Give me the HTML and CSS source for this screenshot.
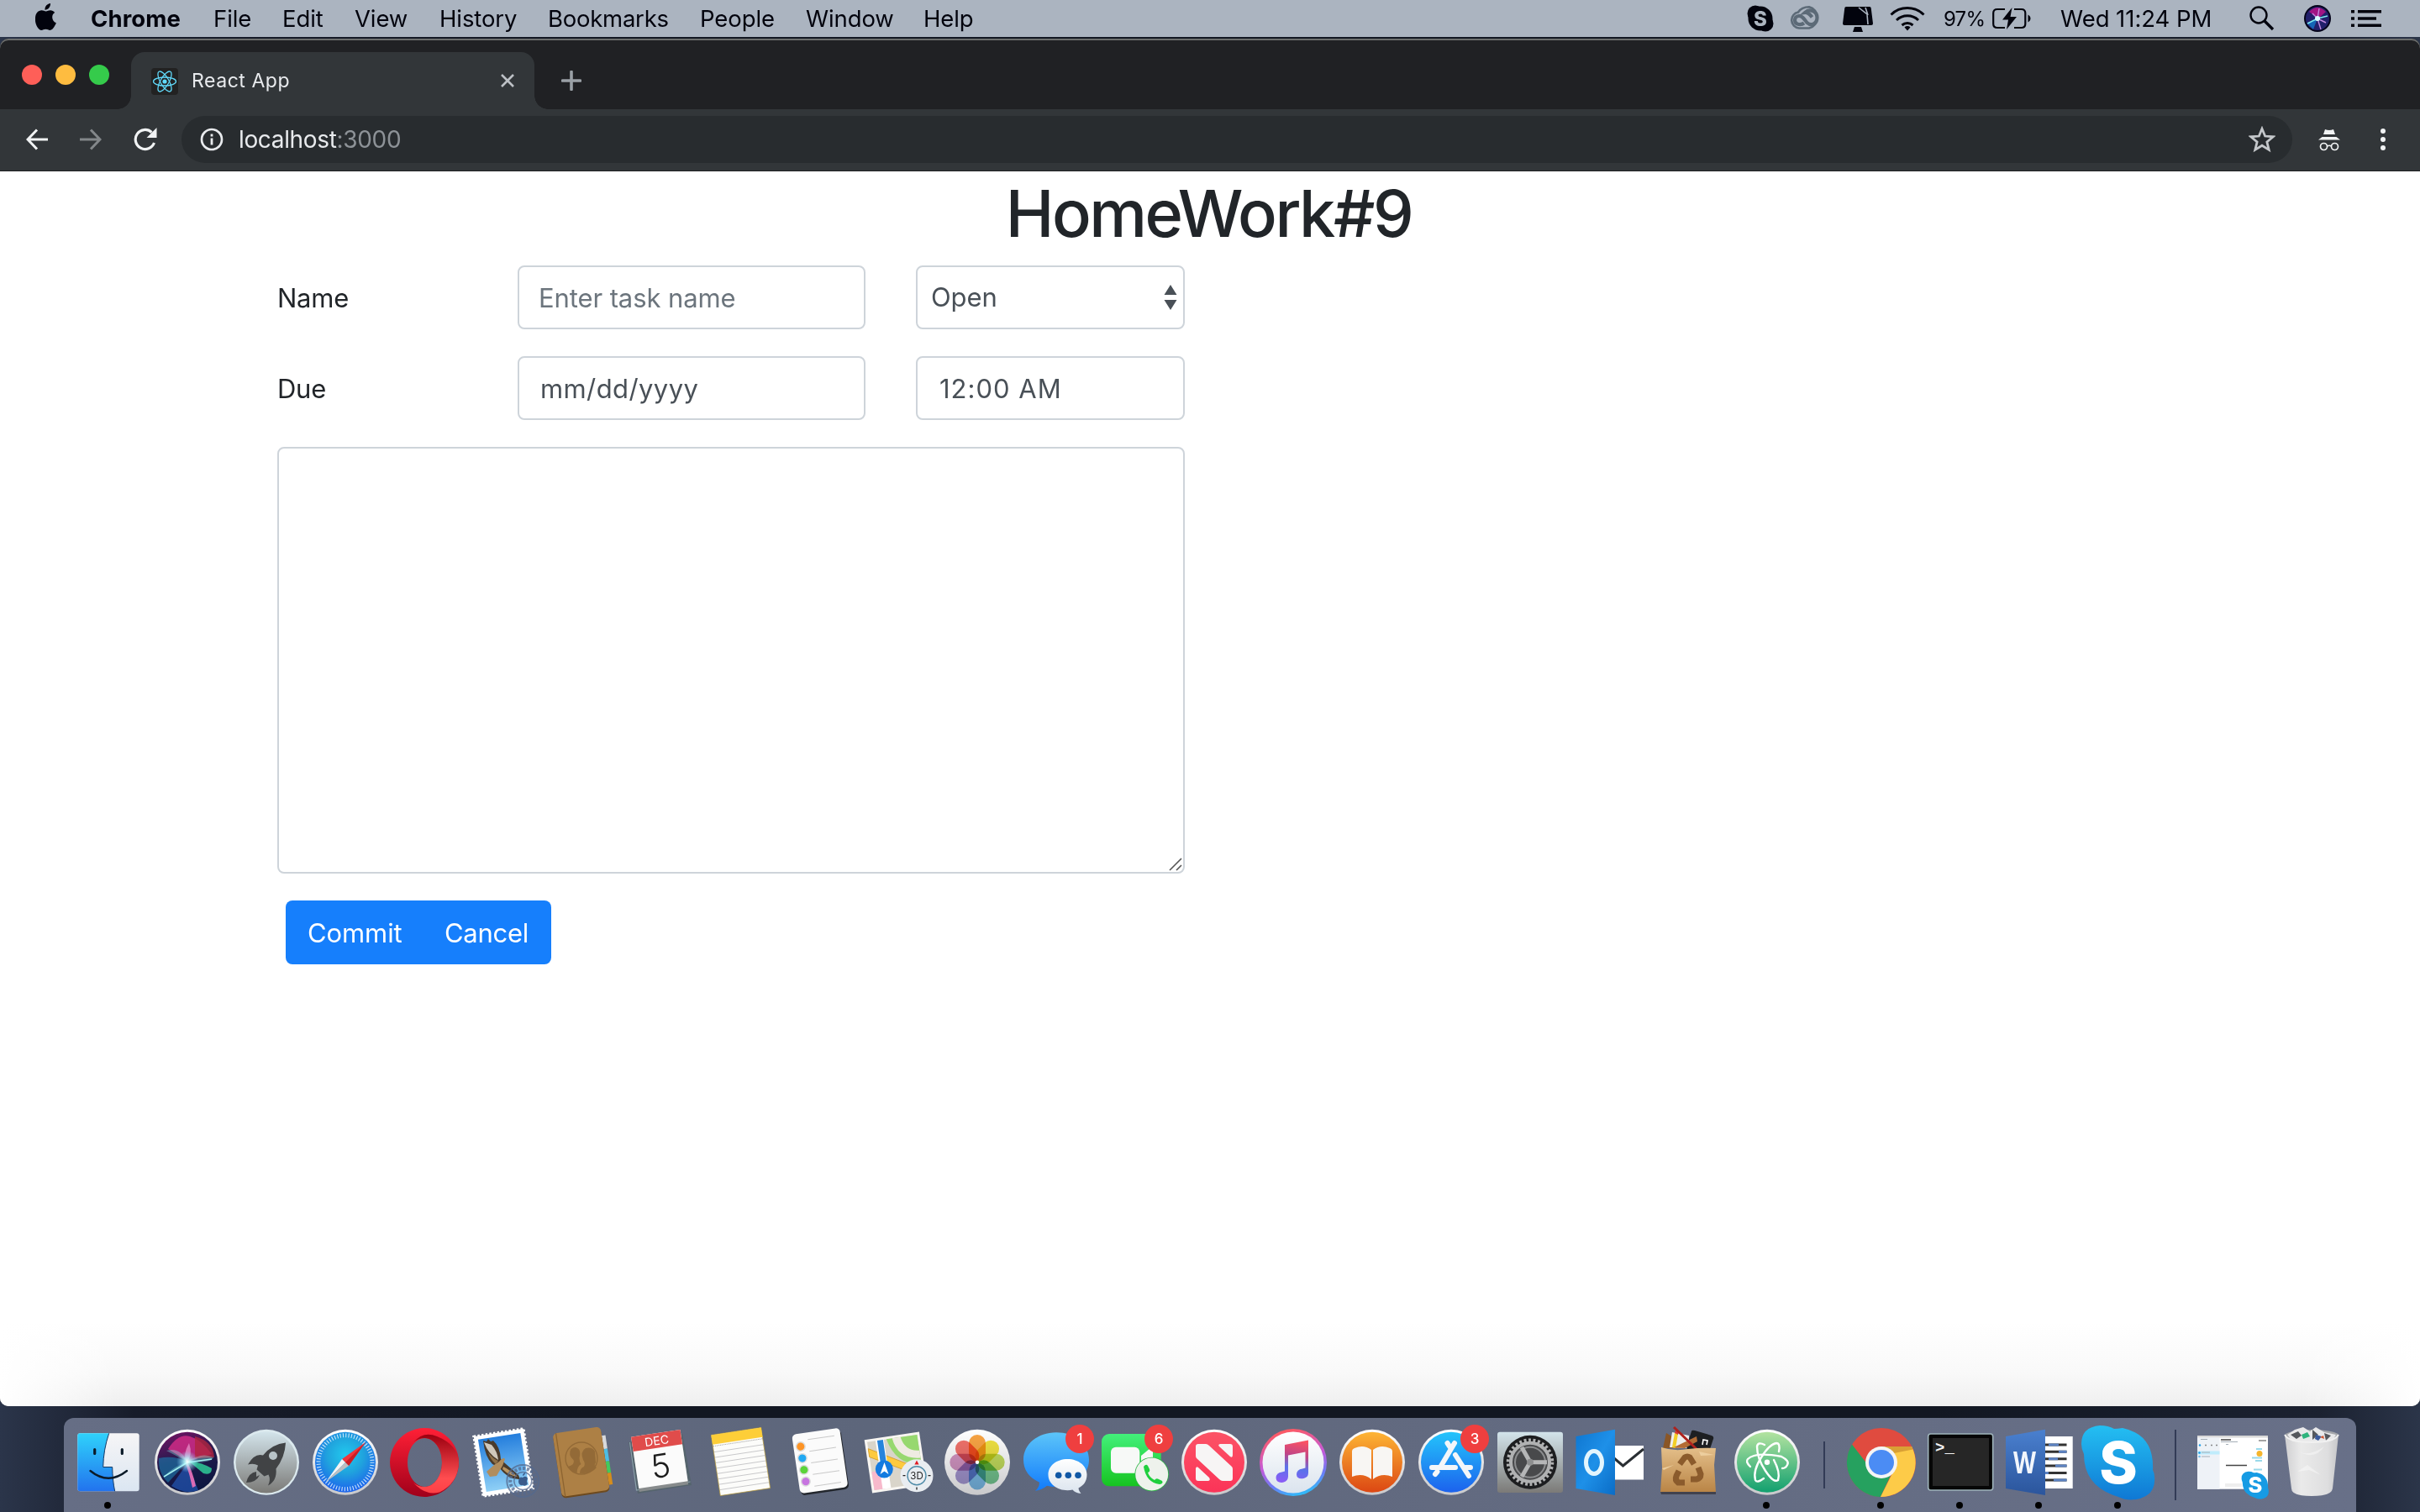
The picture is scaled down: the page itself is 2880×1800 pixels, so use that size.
FILE: index.html
```html
<!DOCTYPE html>
<html lang="en">
<head>
<meta charset="utf-8">
<title>React App</title>
<link rel="stylesheet" href="styles.css">
</head>
<body>
<svg class="defs" width="0" height="0" aria-hidden="true">
  <defs>
    <linearGradient id="ring" x1="0" y1="0" x2="0" y2="1"><stop offset="0" stop-color="#fff"/><stop offset="1" stop-color="#c9c9cb"/></linearGradient>
    <linearGradient id="finderL" x1="0" y1="0" x2="0" y2="1"><stop offset="0" stop-color="#2fd2fb"/><stop offset="1" stop-color="#2273ee"/></linearGradient>
    <linearGradient id="finderR" x1="0" y1="0" x2="0" y2="1"><stop offset="0" stop-color="#f6f5f6"/><stop offset="1" stop-color="#dbe6f2"/></linearGradient>
    <radialGradient id="siriGlow"><stop offset="0" stop-color="#fff"/><stop offset=".3" stop-color="#bff" stop-opacity=".8"/><stop offset="1" stop-color="#8cf" stop-opacity="0"/></radialGradient>
    <linearGradient id="siriBg" x1=".3" y1="0" x2=".6" y2="1"><stop offset="0" stop-color="#6c1462"/><stop offset=".45" stop-color="#221b4c"/><stop offset="1" stop-color="#0b1640"/></linearGradient>
    <linearGradient id="launch" x1="0" y1="0" x2="0" y2="1"><stop offset="0" stop-color="#d3e4eb"/><stop offset="1" stop-color="#7b7a77"/></linearGradient>
    <radialGradient id="safari" cx=".5" cy=".38" r=".6"><stop offset="0" stop-color="#22c9ee"/><stop offset=".5" stop-color="#20a3dd"/><stop offset="1" stop-color="#1d66ec"/></radialGradient>
    <linearGradient id="operaA" x1="0" y1="0" x2="0" y2="1"><stop offset="0" stop-color="#ff2036"/><stop offset="1" stop-color="#a0001a"/></linearGradient>
    <linearGradient id="operaB" x1="0" y1="0" x2="0" y2="1"><stop offset="0" stop-color="#9b0010"/><stop offset=".75" stop-color="#ff4d50"/><stop offset="1" stop-color="#ff4046"/></linearGradient>
    <linearGradient id="sky" x1="0" y1="0" x2="0" y2="1"><stop offset="0" stop-color="#247edd"/><stop offset="1" stop-color="#8fd0f6"/></linearGradient>
    <linearGradient id="msg" x1="0" y1="0" x2="0" y2="1"><stop offset="0" stop-color="#5cc5f9"/><stop offset="1" stop-color="#127bfb"/></linearGradient>
    <linearGradient id="pale" x1="0" y1="0" x2="0" y2="1"><stop offset="0" stop-color="#fff"/><stop offset="1" stop-color="#dbe4ee"/></linearGradient>
    <linearGradient id="face" x1="0" y1="0" x2="0" y2="1"><stop offset="0" stop-color="#43f07b"/><stop offset="1" stop-color="#17c421"/></linearGradient>
    <linearGradient id="news" x1="0" y1="0" x2="0" y2="1"><stop offset="0" stop-color="#fc5366"/><stop offset="1" stop-color="#fb3458"/></linearGradient>
    <linearGradient id="tunesRing" x1=".4" y1="0" x2=".7" y2="1"><stop offset="0" stop-color="#ff5a5f"/><stop offset=".45" stop-color="#c65ad8"/><stop offset=".75" stop-color="#6a7df8"/><stop offset="1" stop-color="#25c7f8"/></linearGradient>
    <linearGradient id="note" gradientUnits="userSpaceOnUse" x1="55" y1="27" x2="45" y2="78"><stop offset="0" stop-color="#fb5262"/><stop offset=".35" stop-color="#c04587"/><stop offset=".65" stop-color="#5a72ea"/><stop offset="1" stop-color="#8a5cf5"/></linearGradient>
    <linearGradient id="books" x1="0" y1="0" x2="0" y2="1"><stop offset="0" stop-color="#fdb534"/><stop offset="1" stop-color="#dc4713"/></linearGradient>
    <linearGradient id="store" x1="0" y1="0" x2="0" y2="1"><stop offset="0" stop-color="#24c4fb"/><stop offset="1" stop-color="#1c62ed"/></linearGradient>
    <linearGradient id="outlook" x1="0" y1="0" x2="1" y2="1"><stop offset="0" stop-color="#0f76d0"/><stop offset=".5" stop-color="#1e90e8"/><stop offset="1" stop-color="#0a6cc6"/></linearGradient>
    <linearGradient id="bag" x1="0" y1="0" x2="0" y2="1"><stop offset="0" stop-color="#e4bf8a"/><stop offset="1" stop-color="#b98445"/></linearGradient>
    <linearGradient id="atom" x1="0" y1="0" x2="0" y2="1"><stop offset="0" stop-color="#b3e3a0"/><stop offset="1" stop-color="#12a06f"/></linearGradient>
    <linearGradient id="word" x1="0" y1="0" x2="0" y2="1"><stop offset="0" stop-color="#4a80cf"/><stop offset="1" stop-color="#2b559c"/></linearGradient>
    <linearGradient id="skype" x1="0" y1="0" x2="0" y2="1"><stop offset="0" stop-color="#24bff2"/><stop offset="1" stop-color="#0f78d4"/></linearGradient>
    <linearGradient id="trash" x1="0" y1="0" x2="1" y2="0"><stop offset="0" stop-color="#cfcfd1"/><stop offset=".3" stop-color="#eaeaea"/><stop offset=".8" stop-color="#dededf"/><stop offset="1" stop-color="#c6c6c9"/></linearGradient>
    <path id="skypeShape" d="M25 9Q3 11 3 31q0 6 3 12 0 39 41 51 12 6 26 2 19-6 17-26 0-4-2-8Q90 20 52 12q-6 1-10 1-7-4-17-4z"/>
  </defs>
</svg>

<header class="menubar">
  <svg class="apple" viewBox="0 0 26 32"><path d="M18 0c.3 2.200-.6 4.200-1.800 5.600-1.200 1.400-3 2.300-4.700 2.200-.3-2.100.7-4.200 1.800-5.500C14.500 1 16.500.1 18 0zM24.900 23.300c-.8 2-1.300 2.900-2.300 4.400-1.300 2.200-3.100 4.200-5.200 4.200-1.900 0-2.400-1.200-5-1.200s-3.200 1.200-5 1.200c-2.100 0-3.800-2-5.100-4C-1.200 22.300-.7 13.700 2.500 10.600c1.400-1.400 3.200-2.300 5-2.300 2.100 0 3.500 1.200 5.200 1.200s2.900-1.200 5.300-1.200c1.900 0 3.800.9 5.200 2.800-4.600 2.600-3.800 9.800 1.700 12.200z" fill="#02030d"/></svg>
  <nav class="menus"><b>Chrome</b><span>File</span><span>Edit</span><span>View</span><span>History</span><span>Bookmarks</span><span>People</span><span>Window</span><span>Help</span></nav>
  <div class="status">
    <svg class="st-skype" viewBox="0 0 32 32"><circle cx="10" cy="10" r="9.500"/><circle cx="22" cy="22" r="9.500"/><circle cx="16" cy="16" r="14.500"/><text x="16" y="24.500" text-anchor="middle" class="s-letter">S</text></svg>
    <svg class="st-cc" viewBox="0 0 38 28" fill="none" stroke="#5c6a77"><path d="M11 26.500a9.600 9.600 0 0 1-1-19C13 3 18 1.300 23 1.300a13 13 0 0 1 0 25.200z" stroke-width="2.600"/><path d="M17 20.500c-2 1.600-4.500 1.800-6.500 1.500-6-1-6-9.500 0-10 5-.5 7 5 10 8 5 4.500 12 1 12-6 0-8-9-11-14.500-6 4-.5 6 2.500 8.500 5.500" stroke-width="4.200"/></svg>
    <svg class="st-mon" viewBox="0 0 36 30"><path d="M4 0h28q1.500 0 1.700 1.500L36 20q0 2-2 2H2q-2 0-2-2L2.300 1.500Q2.500 0 4 0zM14 24h8l2 6H12z"/><path d="M19 1l10 8 1 12M27 1l3 9" stroke="#abb4c0" stroke-width="1.600" fill="none"/></svg>
    <svg class="st-wifi" viewBox="0 0 42 30" fill="none" stroke="#02030d" stroke-width="3"><path d="M1.500 10.500a28 28 0 0 1 39 0M8 17a19 19 0 0 1 26 0M14.500 23a10 10 0 0 1 13 0"/><path d="M17.500 25.500a5 5 0 0 1 7 0L21 29.500z" fill="#02030d" stroke="none"/></svg>
    <span class="pct">97%</span>
    <svg class="st-bat" viewBox="0 0 46 26"><path d="M15 2H6Q1.200 2 1.200 6.500v13Q1.200 24 6 24h9M26 2h8.500q4.800 0 4.800 4.500v13q0 4.500-4.800 4.500H26" fill="none" stroke="#02030d" stroke-width="2.200"/><path d="M42.500 8.500c4 2 4 7 0 9zM23.500 0L12 14.500h7L17 26l12-15h-7.500z"/></svg>
    <span class="clock">Wed 11:24 PM</span>
    <svg class="st-search" viewBox="0 0 30 30" fill="none" stroke="#02030d"><circle cx="11" cy="11" r="9.500" stroke-width="2.400"/><path d="M18 18l10 10" stroke-width="3.400"/></svg>
    <svg class="st-siri" viewBox="0 0 32 32"><circle cx="16" cy="16" r="16" fill="#05041a"/><circle cx="16" cy="16" r="14" fill="#22206b"/><path d="M6 8Q16-2 26 8L17 16z" fill="#a11584"/><path d="M4 22l12-6-5 13z" fill="#1565b5"/><path d="M4 22l12-6 12-3" stroke="#7de8ee" stroke-width="1.600" fill="none"/><path d="M10 10l6 6 4 13M16 16l10 5M16 16l2-12" stroke="#c48ae0" stroke-width="1.400" fill="none"/><circle cx="16" cy="16" r="3" fill="#d8ffff"/></svg>
    <svg class="st-list" viewBox="0 0 36 20"><path d="M0 0h4v3.600H0zM0 8.200h4v3.600H0zM0 16.400h4V20H0zM8 0h28v3.600H8zM8 8.200h22v3.600H8zM8 16.400h28V20H8z"/></svg>
  </div>
</header>

<main class="window">
  <div class="tabstrip">
    <div class="lights"><i class="red"></i><i class="yellow"></i><i class="green"></i></div>
    <div class="tab">
      <svg class="favicon" viewBox="0 0 32 32"><rect width="32" height="32" rx="4" fill="#222"/><g fill="none" stroke="#61dafb" stroke-width="1.300"><ellipse cx="16" cy="16" rx="13.500" ry="5"/><ellipse cx="16" cy="16" rx="13.500" ry="5" transform="rotate(60 16 16)"/><ellipse cx="16" cy="16" rx="13.500" ry="5" transform="rotate(120 16 16)"/></g><circle cx="16" cy="16" r="2.600" fill="#61dafb"/></svg>
      <span class="tab-title">React App</span>
      <svg class="tab-close" viewBox="0 0 16 16"><path d="M1 1l14 14M15 1L1 15" stroke="#bdc1c6" stroke-width="2.600"/></svg>
    </div>
    <svg class="newtab" viewBox="0 0 24 24"><path d="M12 1.500v21M1.500 12h21" stroke="#9aa0a6" stroke-width="3.600" stroke-linecap="round"/></svg>
  </div>
  <div class="toolbar">
    <svg class="t-back" viewBox="0 0 26 26" fill="none" stroke="#f1f3f4" stroke-width="3"><path d="M26 13H2.500M13 1.500L2 13l11 11.500"/></svg>
    <svg class="t-fwd" viewBox="0 0 26 26" fill="none" stroke="#83878a" stroke-width="3"><path d="M0 13h23.500M13 1.500L24 13 13 24.500"/></svg>
    <svg class="t-rel" viewBox="0 0 28 28"><path d="M24.500 18A11.500 11.500 0 1 1 21.500 5.500" fill="none" stroke="#f1f3f4" stroke-width="3.200"/><path d="M27.500 0v12h-12z" fill="#f1f3f4"/></svg>
    <div class="omnibox">
      <svg class="info" viewBox="0 0 28 28"><circle cx="14" cy="14" r="12" fill="none" stroke="#e8eaed" stroke-width="2.700"/><path d="M12.600 7.500h2.800v3h-2.800zM12.600 12.500h2.800v8h-2.800z" fill="#e8eaed"/></svg>
      <span class="url">localhost<span class="port">:3000</span></span>
      <svg class="star" viewBox="0 0 30 30"><path d="M15 3l3.400 8.300 9 .7-6.900 5.800 2.200 8.800L15 21.800l-7.700 4.800 2.200-8.800L2.600 12l9-.7z" fill="none" stroke="#c4c7ca" stroke-width="2.600"/></svg>
    </div>
    <svg class="incog" viewBox="0 0 26 26"><path d="M8 0q5 2 10 0l2 6H6zM4.500 9h17L26 12.500H0z" fill="#f1f3f4"/><g fill="none" stroke="#f1f3f4" stroke-width="1.700"><circle cx="6.500" cy="20.500" r="4"/><circle cx="19.500" cy="20.500" r="4"/><path d="M10.500 20q2.500-1.500 5 0"/></g></svg>
    <svg class="dots" viewBox="0 0 8 28" fill="#f1f3f4"><circle cx="4" cy="4" r="3"/><circle cx="4" cy="14" r="3"/><circle cx="4" cy="24" r="3"/></svg>
  </div>

  <section class="page">
    <h1>HomeWork#9</h1>
    <form class="task">
      <label>Name</label>
      <input class="field" type="text" placeholder="Enter task name">
      <div class="field select"><span>Open</span><svg viewBox="0 0 16 30"><path d="M8 0l7.500 12H.5zM.5 18h15L8 30z" fill="#495057"/></svg></div>
      <label>Due</label>
      <div class="field date">mm/dd/yyyy</div>
      <div class="field time">12:00&nbsp;AM</div>
      <div class="field notes"><svg viewBox="0 0 16 16"><path d="M1 15L15 1M9 15l6-6" stroke="#555" stroke-width="1.600"/></svg></div>
    </form>
    <div class="buttons"><button type="button">Commit</button><button type="button">Cancel</button></div>
  </section>
</main>

<footer class="dock">
  <svg viewBox="0 0 94 112"><rect x="10.300" y="18.300" width="73.400" height="69" rx="3" fill="url(#finderR)"/><path d="M47.700 18.300H13.300a3 3 0 0 0-3 3v63a3 3 0 0 0 3 3h41.400Q52 75 51.700 59H40.700Q41 38 47.700 18.300z" fill="url(#finderL)"/><path d="M47.700 18.300Q41 38 40.700 58.500h11Q52 75 54.700 87.300" fill="none" stroke="#123a66" stroke-width="1"/><path d="M30.700 37.500v5M63.300 37.500v5" stroke="#0b1a28" stroke-width="3.200" stroke-linecap="round"/><path d="M25.500 63Q47 80.500 69 63" fill="none" stroke="#0b1a28" stroke-width="2.400" stroke-linecap="round"/><circle cx="46" cy="104" r="4"/></svg>
  <svg viewBox="0 0 94 112"><circle cx="47" cy="52.700" r="39" fill="url(#ring)"/><circle cx="47" cy="52.700" r="36" fill="url(#siriBg)"/><path d="M24 37Q36 18 50 22T76 43L48 52z" fill="#d02c86" opacity=".85"/><path d="M56 22Q78 28 79 47L56 48z" fill="#b0253f" opacity=".8"/><path d="M13 48Q30 44 47 52L24 77Q12 66 13 48z" fill="#1c7db1" opacity=".6"/><path d="M28 81L47 54 60 86Q45 92 28 81z" fill="#2257b5" opacity=".7"/><path d="M48 51Q64 53 76 60q0 9-10 6z" fill="#2ecb98" opacity=".85"/><path d="M22 39Q38 34 47 52 64 40 78 47 76 54 47 53L20 69Q30 58 47 52" fill="#8ff3ee" opacity=".35"/><path d="M47 53q6 10 10 28l-4 2Q50 68 45 54z" fill="#f070b8" opacity=".9"/><path d="M49 30q-8 14-3 23 8-9 3-23" fill="#fbc1ee" opacity=".5"/><path d="M19 70L47 53 76 49" stroke="#a6f2f0" stroke-width="1.500" fill="none"/><circle cx="47" cy="52" r="13" fill="url(#siriGlow)"/></svg>
  <svg viewBox="0 0 94 112"><circle cx="47" cy="52.700" r="39" fill="#dbe9ee"/><circle cx="47" cy="53" r="36.500" fill="url(#launch)"/><path d="M70 29.500Q54 31 43 44.500q-10-3-18 11 7-2 12 1l-1.500 5 9 8 5-2q3 6-.5 13 11-6 9.500-20Q69 47 70 29.500zM35 64q-9 1-12 13 12 0 16-9l-4 2z" fill="#414345"/><circle cx="55" cy="45" r="5" fill="#b9c4c8"/></svg>
  <svg viewBox="0 0 94 112"><circle cx="47" cy="52.700" r="39" fill="url(#ring)"/><circle cx="47" cy="52.700" r="36" fill="url(#safari)"/><circle cx="47" cy="52.700" r="32" fill="none" stroke="#e6f5ff" stroke-width="5" stroke-dasharray="1.100 2.251" opacity=".85"/><path d="M71 29L43 49l8 8z" fill="#f2353b"/><path d="M71 29L51 57l-4-4z" fill="#c91f25"/><path d="M24 76l19-27 4 4z" fill="#f4f4f4"/><path d="M24 76l27-19-4-4z" fill="#bcbec0"/></svg>
  <svg viewBox="0 0 94 112"><path fill-rule="evenodd" d="M47 12a41 41 0 1 0 .01 0zM47.500 24a20.500 29 0 1 1-.01 0z" fill="url(#operaA)"/><path d="M34 29Q46 15 62 22 87 32 88 53 87 78 65 88.500 48 93 34 77 39 82 47.500 82A20.500 29 0 0 0 47.500 24Q40 24 34 29z" fill="url(#operaB)"/></svg>
  <svg viewBox="0 0 94 112"><g transform="rotate(-9 47 52.700)"><rect x="17" y="17" width="60" height="72" fill="#fff" stroke="#fff" stroke-width="3" stroke-dasharray="2.500 2.200"/><rect x="21.500" y="21.500" width="51" height="63" fill="url(#sky)"/></g><path d="M23 27l4 1 2-3 3 3 3-1q8 7 9 22l5 5 16 14 2 5q-14 1-25-14l-8-4q-9-9-11-28z" fill="#4a3b2b"/><path d="M24 29l9 3q7 8 8 18-12-7-17-21z" fill="#cfc8bb"/><path d="M29 41q6 8 12 10l-3 4q-7-6-9-14z" fill="#8d7048"/><path d="M42 52q5-6 7-3l-3 8-7 12-8 1-4-6 9-8z" fill="#b08d5e"/><path d="M47 58q8 4 17 12-10-1-18-9z" fill="#b89563"/><g fill="none" stroke="#54698e" opacity=".75"><circle cx="70.300" cy="75" r="19" stroke-width="2"/><circle cx="70.300" cy="75" r="15" stroke-width="4" stroke-dasharray="3 2"/><circle cx="70.300" cy="75" r="10.500" stroke-width="1.500"/></g><path d="M70 71q4-3 6 1-2 4 0 6-2 4-6 2-5 1-5-5 1-6 5-4zM70 69q0-3 3-4 0 3-3 4" fill="#3a5c8c"/></svg>
  <svg viewBox="0 0 94 112"><g transform="rotate(-8.500 47 53)"><path d="M74 25h5v16h-5z" fill="#d8d9dc"/><path d="M74 41h5v15h-5z" fill="#4dbde4"/><path d="M74 56h5v14h-5z" fill="#42c95c"/><path d="M74 70h5v14h-5z" fill="#d58d1d"/><rect x="17" y="16" width="57.500" height="76" rx="5" fill="#6e4a1e"/><rect x="17" y="14" width="57.500" height="76" rx="5" fill="#ad8045"/><path d="M21 14v76" stroke="#8c6330" stroke-width="1.300"/></g><circle cx="46" cy="48" r="19" fill="none" stroke="#936a37" stroke-width="1.400"/><path d="M30 58q9-3 6.500-8-7-6-3-13 5-4 9 0 3 3 1 11 0 4 2 7-5 3-5 11-7-2-10.500-8zM44 66q0-6 5-8 2-4-1-8-4-10 3-14 8-2 11 4l1 13q-3 4 1 6-6 8-20 7z" fill="#936a37"/></svg>
  <svg viewBox="0 0 94 112"><path d="M8 29l64-10 11 61-64 10z" fill="#55646d"/><path d="M9.500 29l8 57 64-10" fill="none" stroke="#8ba0aa" stroke-width="1.200"/><g transform="rotate(-8.500 45 50)"><rect x="15.500" y="18" width="59" height="66" fill="#878b8c"/><rect x="15.500" y="18" width="59" height="62" fill="#fbfbfb"/><rect x="15.500" y="18" width="59" height="17.500" fill="#e04c4b"/><text class="cal-month" x="45" y="32" text-anchor="middle">DEC</text><text class="cal-day" x="45" y="71" text-anchor="middle">5</text></g></svg>
  <svg viewBox="0 0 94 112"><g transform="rotate(-8.600 47.500 52)"><rect x="17.500" y="15.500" width="60" height="73" fill="#fcfcfa" stroke="#b79a3a" stroke-width=".7"/><rect x="17.500" y="15.500" width="60" height="11.500" fill="#fdce38"/><path d="M18 29h59" stroke="#999" stroke-dasharray="1 1"/><path d="M18 36h59M18 42.500h59M18 49h59M18 55.500h59M18 62h59M18 68.500h59M18 75h59M18 81.500h59" stroke="#c5c6c8" stroke-width=".9"/></g></svg>
  <svg viewBox="0 0 94 112"><g transform="rotate(-8.300 47.500 51)"><rect x="20" y="18" width="57.500" height="71" rx="5" fill="#22262c"/><rect x="19" y="15.500" width="57.500" height="71" rx="5" fill="#fbfbfb"/><path d="M37 24h32M37 38h32M37 52h32M37 66h32M37 80h32" stroke="#c9c9c9"/><g stroke="#ddd" stroke-width="1.500"><circle cx="27.500" cy="31" r="5.300" fill="#fd9426"/><circle cx="27.500" cy="45" r="5.300" fill="#22a9f3"/><circle cx="27.500" cy="59" r="5.300" fill="#5bd33a"/><circle cx="27.500" cy="73" r="5.300" fill="#c775e0"/></g></g></svg>
  <svg viewBox="0 0 94 112"><g transform="rotate(-8.500 44 53)"><rect x="11" y="21" width="66" height="64" fill="#f8f6f2"/><rect x="14" y="24" width="60" height="58" fill="#d9d5ca"/><path d="M37 24h37v36q-30-3-37-36z" fill="#97d86f"/><path d="M44 24q3 26 30 28v-9Q57 42 54 24z" fill="#efebe2"/><path d="M14 60h13v22H14z" fill="#f7b9cb"/><path d="M14 32l60 34v9L14 42z" fill="#fdca3f" stroke="#d49b25" stroke-width=".8"/><path d="M24 24h10v58H24z" fill="#fff"/><path d="M26 24h7v26h-7z" fill="#2684dc"/></g><circle cx="30.300" cy="61" r="10.500" fill="#147be0"/><path d="M30.500 53l5 14-5-3.500-5 3.500z" fill="#fff"/><circle cx="69" cy="68.700" r="19.500" fill="#e9edf1"/><circle cx="69" cy="68.700" r="11" fill="none" stroke="#4e8ba8" stroke-width="1.400"/><path d="M69 50.500l2.600 5h-5.200z" fill="#e01b22"/><path d="M52.500 68.700h3M82.500 68.700h3M69 82.500v3" stroke="#222" stroke-width="1.300"/><text class="threed" x="69" y="72.700" text-anchor="middle">3D</text></svg>
  <svg viewBox="0 0 94 112"><circle cx="47" cy="52.700" r="39" fill="url(#ring)"/><g class="petals"><rect x="37" y="20" width="20" height="32" rx="10" fill="#f99b2f"/><rect x="37" y="20" width="20" height="32" rx="10" fill="#f0e02d" transform="rotate(45 47 52.700)"/><rect x="37" y="20" width="20" height="32" rx="10" fill="#bcd94a" transform="rotate(90 47 52.700)"/><rect x="37" y="20" width="20" height="32" rx="10" fill="#66c184" transform="rotate(135 47 52.700)"/><rect x="37" y="20" width="20" height="32" rx="10" fill="#6cb5e6" transform="rotate(180 47 52.700)"/><rect x="37" y="20" width="20" height="32" rx="10" fill="#9a8ccc" transform="rotate(225 47 52.700)"/><rect x="37" y="20" width="20" height="32" rx="10" fill="#cf8abb" transform="rotate(270 47 52.700)"/><rect x="37" y="20" width="20" height="32" rx="10" fill="#f1635b" transform="rotate(315 47 52.700)"/></g><circle cx="47" cy="52.700" r="2.200" fill="#fff"/></svg>
  <svg viewBox="0 0 94 112"><path d="M47 17.300c22 0 39 14 39 32.500S69 82 47 82q-6 0-11-1.300-6 5-14 6 5-4 5-10Q8 68 8 49.800C8 31.300 25 17.300 47 17.300z" fill="url(#msg)"/><path d="M60.500 49c13 0 23 8 23 18.500 0 8-4 13-10 16 0 3 2 5 3 6.500-5-.5-8-2-10-4.500q-3 .7-6 .7c-13 0-23-8-23-18.700S47.500 49 60.500 49z" fill="url(#pale)"/><g fill="#1158a5"><circle cx="49.700" cy="68.300" r="3.800"/><circle cx="61.300" cy="68.300" r="3.800"/><circle cx="73" cy="68.300" r="3.800"/></g><circle cx="75" cy="25" r="17" fill="#ef3f3f"/><text class="badge" x="75" y="31" text-anchor="middle">1</text></svg>
  <svg viewBox="0 0 94 112"><rect x="7" y="19" width="70.700" height="62.300" rx="9" fill="url(#face)"/><rect x="18" y="34.700" width="34.300" height="31" rx="6" fill="#f7f9f7"/><path d="M54 45l11-9q3-1 3 2v26q0 3-3 1l-11-9z" fill="#f7f9f7"/><circle cx="66.700" cy="67" r="20.300" fill="#2cb545"/><circle cx="66.700" cy="67" r="19.500" fill="#eef2ec"/><path d="M57 58q3-4 5-1l2 4q1 3-2 4 2 6 8 9 2-3 5-1l4 2q2 3-3 4Q60 77 57 58z" fill="#1fcf3d"/><circle cx="75" cy="25" r="17" fill="#ef3f3f"/><text class="badge" x="75" y="31" text-anchor="middle">6</text></svg>
  <svg viewBox="0 0 94 112"><circle cx="47" cy="52.700" r="39" fill="url(#ring)"/><circle cx="47" cy="52.700" r="36" fill="url(#news)"/><path d="M28 31h9q2 0 4 2l27 25q1 1 1 3v11q0 3-3 3h-9q-2 0-4-2L26 48q-1-1-1-3V34q0-3 3-3zM54 31h12q3 0 3 3v10q0 4-3 2L53 34q-2-2 1-3zM28 59l13 12q2 3-1 4H28q-3 0-3-3V60q1-3 3-1z" fill="#f7f5f5"/></svg>
  <svg viewBox="0 0 94 112"><circle cx="47" cy="53" r="40" fill="url(#tunesRing)"/><circle cx="47" cy="53" r="36.500" fill="url(#pale)"/><path d="M37 32l28-5.500v39q0 5-5.500 6.500-8 1.500-8.500-4.500 0-6 7-7l3.500-1V40.500L41 44.500v25q0 6-6 7.300-8 1-8.500-5.300 0-6 7-7l3.500-1z" fill="url(#note)"/></svg>
  <svg viewBox="0 0 94 112"><circle cx="47" cy="52.700" r="39" fill="url(#ring)"/><circle cx="47" cy="52.700" r="36" fill="url(#books)"/><path d="M46 38q-9-7-20-2-3 1-3 4v30q13-5 23 3zM48 38q9-7 20-2 3 1 3 4v30q-13-5-23 3z" fill="#f8f6f3"/></svg>
  <svg viewBox="0 0 94 112"><circle cx="47" cy="52.700" r="39" fill="url(#ring)"/><circle cx="47" cy="52.700" r="36" fill="url(#store)"/><g stroke="#f3f6f9" stroke-width="6" stroke-linecap="round" fill="none"><path d="M51 30L35 57M28 67l2.500-3M42.500 30l4 6M52 44l16 25M24 59h28M64 59h6"/></g><circle cx="75" cy="25" r="17" fill="#ef3f3f"/><text class="badge" x="75" y="31" text-anchor="middle">3</text></svg>
  <svg viewBox="0 0 94 112"><rect x="8" y="16.700" width="78" height="72.300" rx="3" fill="url(#launch)"/><circle cx="47" cy="52.700" r="32" fill="#1d1e20"/><circle cx="47" cy="52.700" r="23" fill="#48494b" stroke="#b0b1b2" stroke-width="4"/><circle cx="47" cy="52.700" r="26" fill="none" stroke="#b0b1b2" stroke-width="4.500" stroke-dasharray="2.900 2.545"/><circle cx="47" cy="52.700" r="18" fill="none" stroke="#8b8c8e" stroke-width="2"/><path d="M47 52.700h20M47 52.700L37 35M47 52.700L37 70" stroke="#b5b6b7" stroke-width="5"/><circle cx="47" cy="52.700" r="4" fill="#8d8e8f"/></svg>
  <svg viewBox="0 0 94 112"><rect x="50" y="33" width="38" height="40.500" fill="#fff"/><path d="M53 48l10.500 9L88 37" fill="none" stroke="#2a2f33" stroke-width="3"/><path d="M7.500 22L54 13.700V92L7.500 84z" fill="url(#outlook)"/><ellipse cx="29" cy="53" rx="9.500" ry="13.500" fill="none" stroke="#e3f5fd" stroke-width="5"/></svg>
  <svg viewBox="0 0 94 112"><path d="M17 36l4-18 10 6 10 12z" fill="#8a5626"/><path d="M25 35l3-18 20 4v15z" fill="#eee"/><path d="M28 35l3-17 4 1-3 17z" fill="#f3cf27"/><path d="M31 18l1-3 4 1-1 4z" fill="#d43a35"/><path d="M45 34l6-18q0-2 4-1l20 6q3 1 2 4l-4 12H46z" fill="#1d1f22"/><path d="M30 35l27-13 1 6-15 8z" fill="#b36c35"/><path d="M30 11l27 26" stroke="#ae221d" stroke-width="3"/><path d="M64 32l1-6 5 1-1 5" fill="none" stroke="#fff" stroke-width="1.600"/><path d="M15 35q15 5 32 2 16-2 33-1l-2 20 2 33H14l2-30z" fill="url(#bag)"/><path d="M14 88h66v3H15z" fill="#41424e"/><path d="M16 60l14-4-12 6zM60 40l18 4-16 1z" fill="#edce9e"/><g fill="none" stroke="#8b5b2c" stroke-width="7"><path d="M37 55l6-8q3-2 6 0l5 8"/><path d="M59 59l3 8q0 5-5 6h-7"/><path d="M43 77h-8q-4-3-2-8l3-6"/></g></svg>
  <svg viewBox="0 0 94 112"><circle cx="47" cy="52.700" r="39" fill="url(#ring)"/><circle cx="47" cy="52.700" r="36" fill="url(#atom)"/><g fill="none" stroke="#fff" stroke-width="2.400" stroke-linecap="round"><path d="M27 58q-6-6-3-9 9-9 40-3 10 5 7 10-2 4-6 4"/><path d="M61 40q2-10-3-10-8 1-18 17T33 74q2 4 10-2"/><path d="M44 32q-8-4-9 2 0 14 10 29t15 11q3-9-5-24"/></g><circle cx="47" cy="52.700" r="3.200" fill="#fff"/><circle cx="46" cy="104" r="4"/></svg>
  <div class="rule short"></div>
  <svg viewBox="0 0 94 112"><circle cx="47" cy="53" r="41" fill="#e04b3f"/><path d="M12 31.500A41 41 0 0 0 46 94L62 60 47 53 34 60z" fill="#26a15f"/><path d="M83 34A41 41 0 0 1 46 94L62 62V34z" fill="#fdcb48"/><path d="M45 34h38l1.500 3.500L62 42z" fill="#d9a035"/><circle cx="47" cy="53" r="19" fill="#f5f5f5"/><circle cx="47" cy="53" r="15" fill="#4b8cf4"/><circle cx="46" cy="104" r="4"/></svg>
  <svg viewBox="0 0 94 112"><rect x="8.700" y="19" width="77" height="67" rx="3" fill="#060606" stroke="#9fb4bb" stroke-width="1.600"/><rect x="14" y="24" width="67" height="57" fill="#262626"/><text class="prompt" x="17" y="41">&gt;_</text><circle cx="46" cy="104" r="4"/></svg>
  <svg viewBox="0 0 94 112"><rect x="50" y="22" width="36.700" height="62" fill="#fff"/><path d="M54 32h25.500M54 40.300h25.500M54 48.700h25.500M54 57h25.500M54 65.500h25.500M54 74h25.500" stroke="#333" stroke-width="3"/><path d="M58 32h12M70 40.300h9.500M58 48.700h11M66 57h13.500M54 65.500h4M64 74h15.500" stroke="#5d83c2" stroke-width="3"/><path d="M7 22L54 13.700V92L7 84z" fill="url(#word)"/><text class="wletter" x="29.500" y="66" text-anchor="middle" textLength="27" lengthAdjust="spacingAndGlyphs">W</text><circle cx="46" cy="104" r="4"/></svg>
  <svg viewBox="0 0 94 112"><use href="#skypeShape" fill="url(#skype)"/><text class="sbig" x="47" y="78" text-anchor="middle">S</text><circle cx="46" cy="104" r="4"/></svg>
  <div class="rule tall"></div>
  <svg viewBox="0 0 94 112"><rect x="5" y="21" width="84" height="63.700" fill="#fff"/><path d="M5 21h84v2.400H5z" fill="#d8d8d8"/><path d="M5 23.400h26.500v61.300H5z" fill="#eef2f7"/><path d="M5 39.500h26.500v4H5z" fill="#bfecfc"/><g fill="#1e9be6"><circle cx="8" cy="32.500" r="1.200"/><circle cx="7.500" cy="41.500" r="1.300"/><circle cx="7.500" cy="46" r="1.300" opacity=".6"/></g><path d="M14 32.500h2M21 32.500h2M27 32.500h2M78 27h9" stroke="#888" stroke-width="1.400"/><path d="M33 26h12M39 56.500h25" stroke="#444" stroke-width="1.500"/><path d="M9 25.500h8M10 41h10M10 46h10M33 28.500h20M39 31.500h3" stroke="#a5aeb7" stroke-width="1"/><path d="M75 37h7M70 47.500h12M74 51h8M72 61.500h10" stroke="#9ad9ea" stroke-width="2"/><circle cx="79" cy="42.500" r="3.500" fill="#f6b52c"/><path d="M38 78h20v4H38z" fill="#eee"/><g transform="translate(56.500 60.500) scale(.37)"><use href="#skypeShape" fill="#169be4"/><text class="sbig" x="47" y="78" text-anchor="middle">S</text></g></svg>
  <svg viewBox="0 0 94 112"><path d="M15 20q32 8 64 0l-7 64q-1 9-25 9t-24-9z" fill="url(#trash)"/><ellipse cx="47.200" cy="21" rx="32" ry="7" fill="#a4a6aa"/><path d="M18 20l9-6 10-3 8 5 7-5 10 6 14 3-4 7-22 2-26-1z" fill="#e9e9ea"/><path d="M22 20l9-4 4 5-6 4zM48 14l7 6-7 6zM62 18l8 3-6 6z" fill="#55585d"/><path d="M35 20l7-3 3 5-8 3z" fill="#2fb47d"/><path d="M52 20l7 2-4 5-4-2z" fill="#3c5b9c"/><path d="M57 23l4-2 1 4z" fill="#d1552f"/><path d="M15 20q5 9 32 9t32-9" stroke="#f1f1f1" stroke-width="2" fill="none"/><path d="M28 38q14 10 34-4-12 18-34 4M30 64l12-8 16 12-14-6z" fill="#fff" opacity=".4"/></svg>
</footer>
</body>
</html>
```
FILE: styles.css
```css
* { box-sizing: border-box; }
body {
  margin: 0;
  width: 2880px;
  height: 1800px;
  overflow: hidden;
  display: flex;
  flex-direction: column;
  font-family: Inter, "Liberation Sans", sans-serif;
  background: linear-gradient(90deg, #2b354a 0, #171c2a 160px, #121722 700px, #121722 2300px, #1b2130 2760px, #2b3549 2880px);
}
svg { display: block; flex: none; }
.defs { position: absolute; }

.menubar {
  height: 44px;
  flex: none;
  display: flex;
  align-items: center;
  background: #abb4c0;
  color: #02030d;
  font-size: 27.500px;
  padding-left: 42px;
}
.menubar svg { fill: #02030d; }
.apple { width: 26px; height: 32px; margin: -4px 40px 0 0; }
.menus {
  display: grid;
  grid-template-columns: 146px 82px 86px 101px 129px 181px 126px 140px 90px;
  line-height: 44px;
  letter-spacing: -.1px;
}
.menus b { font-weight: 700; letter-spacing: .1px; }
.menus span:nth-child(6) { letter-spacing: -.25px; }
.status { margin-left: auto; display: flex; align-items: center; white-space: nowrap; }
.st-skype { width: 32px; height: 32px; }
.s-letter { font: 800 24px Inter, sans-serif; fill: #abb4c0; }
.menubar .st-cc { width: 38px; height: 28px; margin: -2px 0 0 19px; fill: none; }
.st-mon { width: 36px; height: 30px; margin: 2px 0 0 25px; }
.menubar .st-wifi { width: 42px; height: 30px; margin: -1px 0 0 20px; fill: none; }
.pct { font-size: 24px; width: 57px; margin-left: 22px; letter-spacing: -.8px; }
.st-bat { width: 46px; height: 26px; margin-left: 1px; }
.clock { width: 186px; margin-left: 35px; letter-spacing: -.05px; }
.menubar .st-search { width: 30px; height: 30px; margin: 0 1px 0 39px; fill: none; }
.st-siri { width: 32px; height: 32px; margin-left: 34px; }
.st-list { width: 36px; height: 20px; margin: 0 46px 0 24px; }

.window {
  margin-top: 2px;
  height: 1628px;
  flex: none;
  border-radius: 10px;
  overflow: hidden;
  background: #202124;
  box-shadow: inset 0 2px 0 #6c6e6d;
}
.tabstrip { height: 84px; display: flex; align-items: flex-start; padding: 16px 0 0 26px; }
.lights { display: flex; gap: 16px; margin: 15px 0 0; width: 130px; }
.lights i { width: 24px; height: 24px; border-radius: 50%; }
.red { background: #fe5f58; }
.yellow { background: #febc40; }
.green { background: #35cb4b; }
.tab {
  position: relative;
  width: 480px;
  height: 68px;
  padding: 0 24px 0;
  display: flex;
  align-items: center;
  border-radius: 16px 16px 0 0;
  background: #323639;
}
.tab::before, .tab::after {
  content: "";
  position: absolute;
  bottom: 0;
  width: 16px;
  height: 16px;
}
.tab::before { left: -16px; background: radial-gradient(circle at 0 0, transparent 15.500px, #323639 16px); }
.tab::after { right: -16px; background: radial-gradient(circle at 100% 0, transparent 15.500px, #323639 16px); }
.favicon { width: 32px; height: 32px; margin-top: 1px; }
.tab-title { margin-left: 16px; font-size: 23px; color: #e8eaed; letter-spacing: .55px; flex: 1; }
.tab-close { width: 16px; height: 16px; }
.newtab { width: 24px; height: 24px; margin: 22px 0 0 32px; }

.toolbar {
  height: 74px;
  display: flex;
  align-items: center;
  padding: 0 40px 2px 31px;
  background: #323639;
  border-bottom: 1px solid #1f2123;
}
.t-back, .t-fwd { width: 26px; height: 26px; margin-right: 38px; }
.t-rel { width: 28px; height: 28px; margin: 1px 29px 0 0; }
.omnibox {
  width: 2512px;
  height: 56px;
  border-radius: 28px;
  background: #282c2f;
  display: flex;
  align-items: center;
  padding: 0 20px 0 22px;
}
.info { width: 28px; height: 28px; margin-top: 1px; }
.url { margin: 1px 0 0 18px; flex: 1; font-size: 28px; color: #e8eaed; letter-spacing: -.35px; }
.port { color: #8d9297; letter-spacing: -.3px; }
.star { width: 32px; height: 32px; }
.incog { width: 26px; height: 26px; margin: 2px 0 0 31px; }
.dots { width: 8px; height: 28px; margin-left: 47px; }

.page {
  height: 1470px;
  padding: 0 300px;
  color: #212529;
  font-size: 31px;
  background:
    linear-gradient(90deg, #fff 0, transparent 140px, transparent 2740px, #fff 2880px),
    linear-gradient(#fff 1370px, #f9f9f9 1430px, #efefef 1470px);
}
h1 {
  margin: 0 0 16px;
  height: 96px;
  line-height: 101px;
  font-size: 77.500px;
  font-weight: 500;
  letter-spacing: -2.500px;
  text-align: center;
  padding-right: 3px;
}
.task {
  width: 1080px;
  margin-left: 30px;
  display: grid;
  grid-template-columns: 286px 414px 60px 320px;
  grid-template-rows: 76px 76px 508px;
  row-gap: 32px;
}
.select, .time { grid-column: 4; }
label { line-height: 78px; letter-spacing: -.25px; }
.field {
  width: 100%;
  border: 2px solid #ced4da;
  border-radius: 8px;
  background: #fff;
  color: #495057;
  font: 31px/74px Inter, "Liberation Sans", sans-serif;
  letter-spacing: -.1px;
  padding: 0 23px;
}
input.field { padding-top: 2px; }
.field::placeholder { color: #6c757d; opacity: 1; }
.select { display: flex; justify-content: space-between; align-items: center; padding: 0 7px 0 16px; }
.select svg { width: 16px; height: 30px; margin-top: 0; }
.date { padding-left: 25px; letter-spacing: .4px; }
.time { padding-left: 26px; letter-spacing: 1px; }
.notes { grid-column: 1 / -1; display: flex; justify-content: flex-end; align-items: flex-end; padding: 0 1px 1px; }
.notes svg { width: 16px; height: 16px; }
.buttons { display: flex; margin: 32px 0 0 40px; width: 316px; height: 76px; border-radius: 8px; background: #167ffc; }
.buttons button {
  border: 0;
  padding: 0 0 0 26px;
  width: 163px;
  background: none;
  color: #fff;
  font: 31px Inter, "Liberation Sans", sans-serif;
  letter-spacing: -.1px;
  text-align: left;
}
.buttons button + button { width: 152px; letter-spacing: -.3px; }

.dock {
  flex: none;
  width: 2728px;
  height: 112px;
  margin: 14px 0 0 76px;
  padding: 0 6px;
  display: flex;
  border-radius: 12px 12px 0 0;
  background: linear-gradient(90deg, #666e85 0, #5d667b 35%, #626a80 60%, #687088 100%);
}
.dock svg { width: 94px; height: 112px; overflow: visible; }
.rule { flex: none; width: 42px; display: flex; justify-content: center; }
.rule::before { content: ""; width: 2px; background: #323b56; }
.short { padding: 28px 0; }
.tall { padding: 14px 0; }
.petals rect { mix-blend-mode: multiply; opacity: .9; }
.badge { font: 500 17px Inter, sans-serif; fill: #fff; }
.cal-month { font: 14px Inter, sans-serif; fill: #fff; }
.cal-day { font: 300 39px Inter, sans-serif; fill: #1c1c1c; }
.threed { font: 11.500px Inter, sans-serif; fill: #222; }
.prompt { font: bold 19px "Liberation Mono", monospace; fill: #f2f2f2; }
.wletter { font: bold 36px "Open Sans", sans-serif; fill: #f2f6fc; }
.sbig { font: 800 69px Inter, sans-serif; fill: #fff; }
```
